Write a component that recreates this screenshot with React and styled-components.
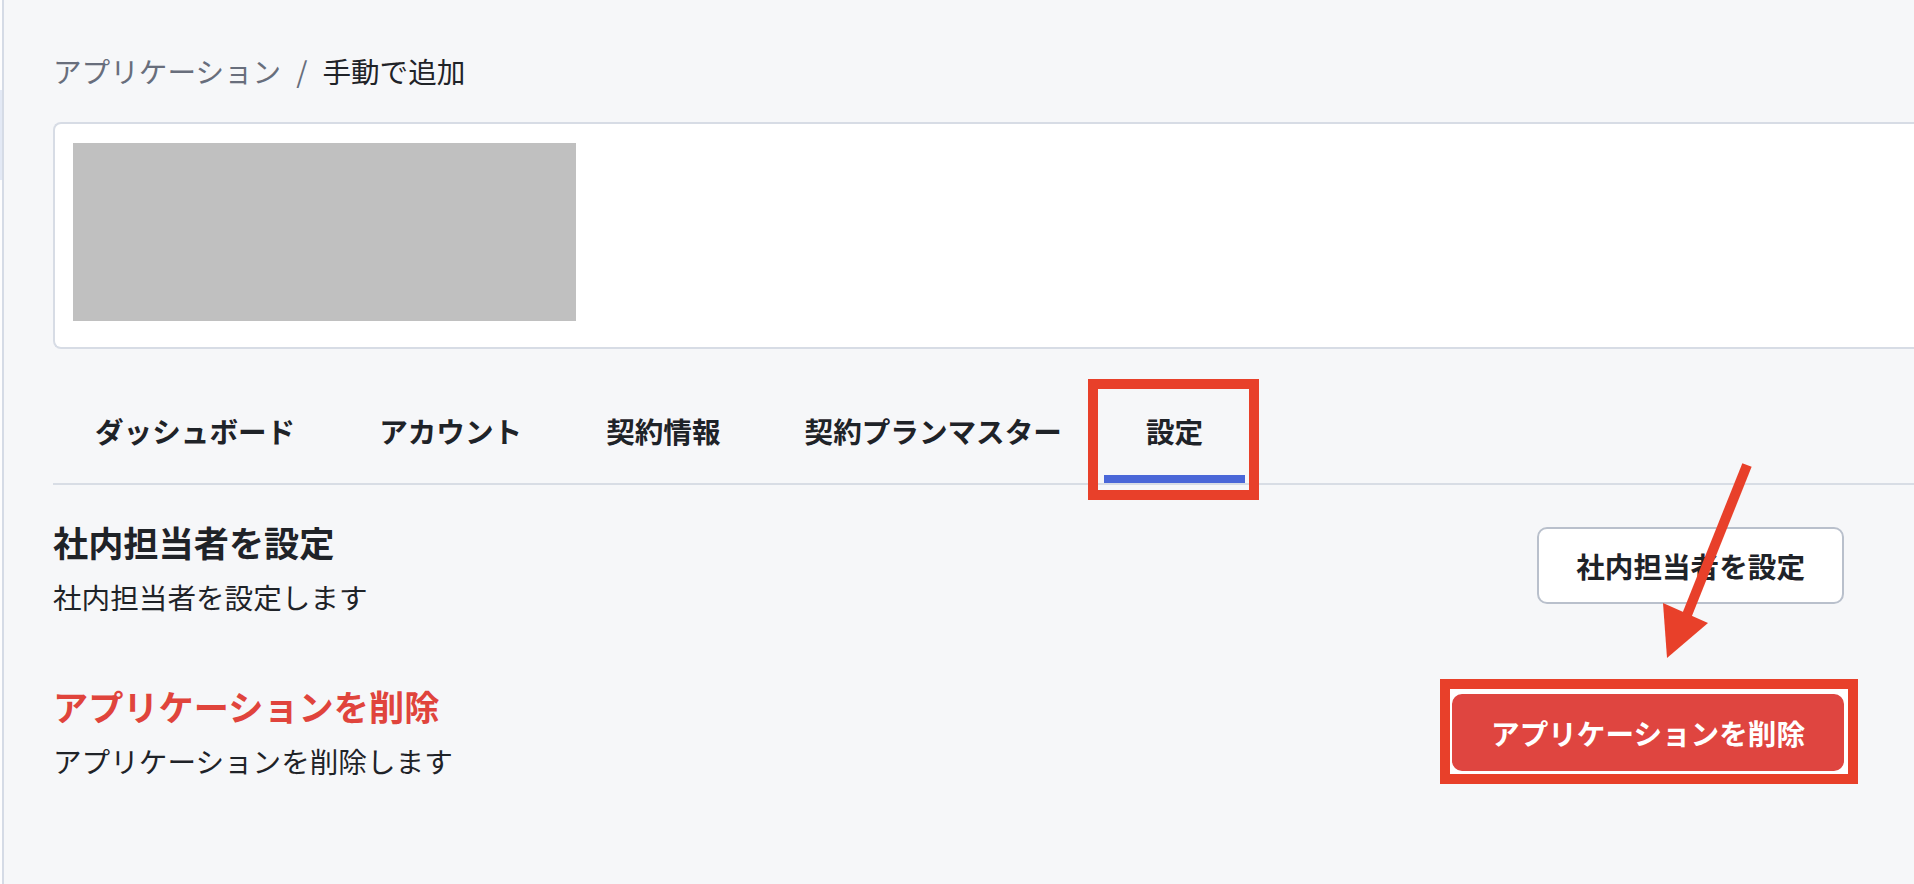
import React from "react"
import styled, { createGlobalStyle } from "styled-components"

const GlobalStyle = createGlobalStyle`
    html, body{
        margin: 0;
        padding: 0;
        background: #f6f7f9;
        overflow: hidden;
    }
    body{
        font-family: "Noto Sans CJK JP", "Noto Sans", sans-serif;
        color: #1f2328;
    }
    *{
        box-sizing: border-box;
    }
`

const Layout = styled.div`
    display: flex;
    min-height: 884px;
`

const Sidebar = styled.aside`
    flex: none;
    width: 4px;
    background: #fdfdfe;
    border-right: 2px solid #d5dbe6;
    padding-top: 90px;
`

const SidebarActive = styled.div`
    height: 90px;
    background: #e3e9f5;
`

const Main = styled.main`
    position: relative;
    flex: 1;
    padding: 51px 0 0 49px;
`

const Breadcrumb = styled.nav`
    display: flex;
    align-items: center;
    font-size: 28.6px;
    line-height: 40px;
    margin-bottom: 31px;
`

const Crumb = styled.span`
    color: ${p => p.$current ? "#1f2328" : "#686e7c"};
`

const Separator = styled.span`
    color: #686e7c;
    margin: 0 15px;
`

const HeaderCard = styled.section`
    background: #fff;
    border: 2px solid #d7dce5;
    border-right: none;
    border-radius: 8px 0 0 8px;
    padding: 19px 18px 26px;
`

const Placeholder = styled.div`
    width: 503px;
    height: 178px;
    background: #c0c0c0;
`

const TabBar = styled.div`
    display: flex;
    margin-top: 24px;
    border-bottom: 2px solid #d8dde5;
`

const Tab = styled.button`
    background: none;
    border: none;
    border-bottom: 8px solid ${p => p.$active ? "#4a67d8" : "transparent"};
    padding: 38px 42px 24px;
    font-family: inherit;
    font-size: 28.6px;
    line-height: 40px;
    font-weight: 700;
    color: #1f2328;
    cursor: pointer;
`

const Highlight = styled.span`
    position: relative;
    display: inline-flex;
    &::before{
        content: "";
        position: absolute;
        inset: ${p => p.$inset};
        border: 10px solid #e8402a;
        background: ${p => p.$fill || "transparent"};
        z-index: 0;
        pointer-events: none;
    }
    & > *{
        position: relative;
        z-index: ${p => p.$fill ? 1 : "auto"};
    }
`

const Settings = styled.div`
    display: flex;
    flex-direction: column;
    gap: 64px;
    padding: 33px 70px 0 0;
`

const Row = styled.div`
    display: flex;
    justify-content: space-between;
    align-items: center;
`

const RowTitle = styled.h2`
    margin: 0;
    font-size: 35.2px;
    line-height: 48px;
    font-weight: 700;
    color: ${p => p.$danger ? "#e0443c" : "#1f2328"};
`

const RowText = styled.p`
    margin: 10px 0 0;
    font-size: 28.6px;
    line-height: 42px;
    color: #1f2328;
`

const Button = styled.button`
    font-family: inherit;
    font-size: 28.6px;
    line-height: 41px;
    font-weight: 700;
    padding: 16px 37px;
    margin-top: ${p => p.$danger ? "0" : "-6px"};
    border-radius: 10px;
    border: 2px solid ${p => p.$danger ? "#df4540" : "#b9c0cc"};
    background: ${p => p.$danger ? "#df4540" : "#fff"};
    color: ${p => p.$danger ? "#fff" : "#1f2328"};
    cursor: pointer;
    white-space: nowrap;
`

const Arrow = styled.svg`
    position: absolute;
    left: 1636px;
    top: 455px;
    width: 120px;
    height: 215px;
    pointer-events: none;
`

const tabs = ["ダッシュボード", "アカウント", "契約情報", "契約プランマスター", "設定"]

const App = () => {
    return (
        <>
            <GlobalStyle/>
            <Layout>
                <Sidebar>
                    <SidebarActive/>
                </Sidebar>
                <Main>
                    <Breadcrumb>
                        <Crumb>アプリケーション</Crumb>
                        <Separator>/</Separator>
                        <Crumb $current>手動で追加</Crumb>
                    </Breadcrumb>
                    <HeaderCard>
                        <Placeholder/>
                    </HeaderCard>
                    <TabBar>
                        {tabs.map(t => t === "設定" ?
                            <Highlight key={t} $inset="6px -14px -17px -16px">
                                <Tab $active>{t}</Tab>
                            </Highlight>
                            :
                            <Tab key={t}>{t}</Tab>
                        )}
                    </TabBar>
                    <Settings>
                        <Row>
                            <div>
                                <RowTitle>社内担当者を設定</RowTitle>
                                <RowText>社内担当者を設定します</RowText>
                            </div>
                            <Button>社内担当者を設定</Button>
                        </Row>
                        <Row>
                            <div>
                                <RowTitle $danger>アプリケーションを削除</RowTitle>
                                <RowText>アプリケーションを削除します</RowText>
                            </div>
                            <Highlight $inset="-15px -14px -13px -12px" $fill="#fff">
                                <Button $danger>アプリケーションを削除</Button>
                            </Highlight>
                        </Row>
                    </Settings>
                    <Arrow viewBox="0 0 120 215">
                        <line x1="107" y1="10" x2="47" y2="160" stroke="#e8402a" strokeWidth="10"/>
                        <polygon points="23,148 68,168 27,203" fill="#e8402a"/>
                    </Arrow>
                </Main>
            </Layout>
        </>
    )
}

export default App
